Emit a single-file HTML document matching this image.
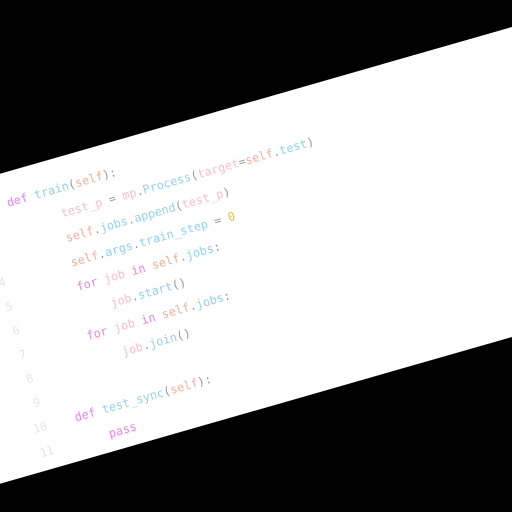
<!DOCTYPE html>
<html><head><meta charset="utf-8"><style>
html,body{margin:0;padding:0;background:#000;width:512px;height:512px;overflow:hidden}
#w{position:relative;width:512px;height:512px;overflow:hidden;background:#000}
#c{position:absolute;left:-54.3px;top:207.7px;transform:rotate(-16deg);transform-origin:0 0}
#p{position:absolute;left:-400px;top:-18px;width:1400px;height:298px;background:#fff}
.l{position:absolute;white-space:pre;font-family:"DejaVu Sans Mono","Liberation Mono",monospace;font-size:11.8px;line-height:25px;height:25px;color:#999}
.n{position:absolute;width:37px;left:0;text-align:right;font-family:"DejaVu Sans Mono",monospace;font-size:11.8px;line-height:25px;color:#e6e6e6}
.k{color:#f47cf4}.f{color:#8cd2f8}.s{color:#f8ae98}.v{color:#ffbccb}.o{color:#f2b830}
</style></head><body><div id="w">
<div id="c">
<div id="p"></div>
<div class="n" style="top:0">1</div>
<div class="n" style="top:25px">2</div>
<div class="n" style="top:50px">3</div>
<div class="n" style="top:75px">4</div>
<div class="n" style="top:100px">5</div>
<div class="n" style="top:125px">6</div>
<div class="n" style="top:150px">7</div>
<div class="n" style="top:175px">8</div>
<div class="n" style="top:200px">9</div>
<div class="n" style="top:225px">10</div>
<div class="n" style="top:250px">11</div>
<div class="l" style="top:0;left:60px"><span class="k">def</span> <span class="f">train</span>(<span class="s">self</span>):</div>
<div class="l" style="top:25px;left:109px"><span class="v">test_p</span> = <span class="v">mp</span>.<span class="f">Process</span>(<span class="v">target</span>=<span class="s">self</span>.<span class="f">test</span>)</div>
<div class="l" style="top:50px;left:107px"><span class="s">self</span>.<span class="f">jobs</span>.<span class="f">append</span>(<span class="v">test_p</span>)</div>
<div class="l" style="top:75px;left:105px"><span class="s">self</span>.<span class="f">args</span>.<span class="f">train_step</span> = <span class="o">0</span></div>
<div class="l" style="top:100px;left:104px"><span class="k">for</span> <span class="v">job</span> <span class="k">in</span> <span class="s">self</span>.<span class="f">jobs</span>:</div>
<div class="l" style="top:125px;left:132px"><span class="v">job</span>.<span class="f">start</span>()</div>
<div class="l" style="top:150px;left:100px"><span class="k">for</span> <span class="v">job</span> <span class="k">in</span> <span class="s">self</span>.<span class="f">jobs</span>:</div>
<div class="l" style="top:175px;left:129.5px"><span class="v">job</span>.<span class="f">join</span>()</div>
<div class="l" style="top:225px;left:66px"><span class="k">def</span> <span class="f">test_sync</span>(<span class="s">self</span>):</div>
<div class="l" style="top:250px;left:94.4px"><span class="k">pass</span></div>
</div>
</div></body></html>
